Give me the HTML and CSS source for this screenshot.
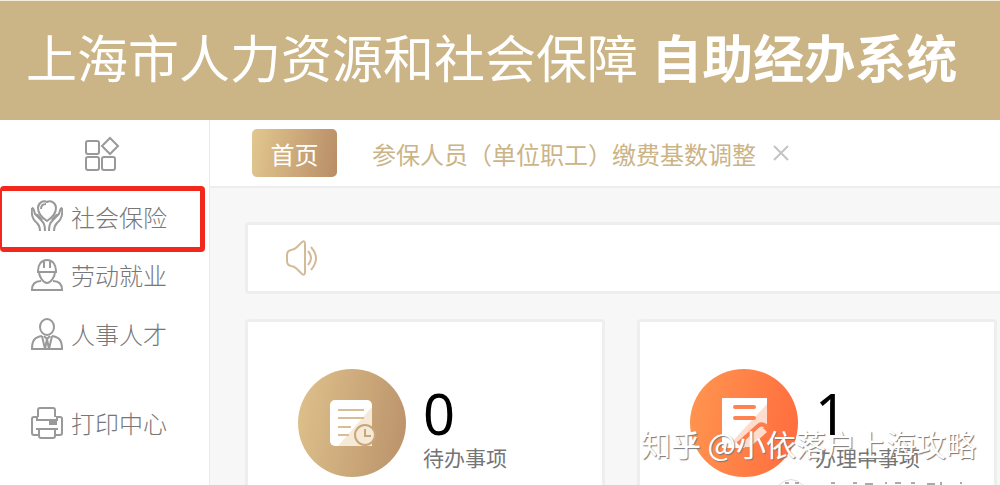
FILE: index.html
```html
<!DOCTYPE html>
<html lang="zh-CN">

<head>
    <meta charset="utf-8">
    <meta name="viewport" content="width=device-width, initial-scale=1.0">
    <title>上海市人力资源和社会保障 自助经办系统</title>

    <link rel="stylesheet" href="styles.css">
</head>

<body>

    <header>
        <h1>上海市人力资源和社会保障 <strong>自助经办系统</strong></h1>
    </header>

    <div class="layout">
        <nav class="sidebar">
            <button class="menu-toggle" aria-label="全部菜单">
                <svg width="36" height="36" viewBox="0 0 36 36">
                    <rect x="2" y="5" width="13" height="13" rx="2" />
                    <rect x="2" y="21" width="13" height="13" rx="2" />
                    <rect x="18" y="21" width="13" height="13" rx="2" />
                    <path d="M26 2L34 10L26 18L18 10Z" />
                </svg>
            </button>
            <a class="menu-item active" href="#">
                <svg width="32" height="32" viewBox="0 0 32 32">
                    <path d="M16 21C10 17 7 13 7 8C7 3 12 0 16 2C20 0 25 3 25 8C25 13 22 17 16 21Z" />
                    <path d="M10 9C10 6 12 4 15 4" />
                    <path d="M1 8C3 8 3 11 4 14L10 20C13 23 14 25 14 31M1 8C0 15 2 20 6 23C8 25 9 27 9 31M5 15C7 14 9 17 11 20" />
                    <path d="M31 8C29 8 29 11 28 14L22 20C19 23 18 25 18 31M31 8C32 15 30 20 26 23C24 25 23 27 23 31M27 15C25 14 23 17 21 20" />
                </svg>
                社会保险
            </a>
            <a class="menu-item" href="#">
                <svg width="32" height="32" viewBox="0 0 32 32">
                    <path d="M7 12C7 6 10 1 16 1C22 1 25 6 25 12M6 13H26M13 2V9M19 2V9" />
                    <path d="M8 13C8 17 12 24 16 24C20 24 24 17 24 13" />
                    <path d="M10 22C4 22 1 25 1 31H31C31 25 28 22 22 22" />
                </svg>
                劳动就业
            </a>
            <a class="menu-item" href="#">
                <svg width="32" height="32" viewBox="0 0 32 32">
                    <ellipse cx="16" cy="9" rx="7" ry="8" />
                    <path d="M11 18C4 19 1 22 1 31H31C31 22 28 19 21 18" />
                    <path d="M11 18L14 31L16 21L18 31L21 18M13 18L16 21L19 18" />
                </svg>
                人事人才
            </a>
            <a class="menu-item menu-print" href="#">
                <svg width="32" height="32" viewBox="0 0 32 32">
                    <path d="M7 10V3Q7 1 9 1H22Q24 1 24 3V10" />
                    <path d="M7 28H3Q1 28 1 26V12Q1 10 3 10H6V13H26V10H29Q31 10 31 12V26Q31 28 29 28H25" />
                    <path d="M5 22H27M8 22V29Q8 31 10 31H22Q24 31 24 29V22M19 15H25V17H19Z" />
                </svg>
                打印中心
            </a>
        </nav>

        <div class="content">
            <div class="tabs">
                <button class="tab-home">首页</button>
                <a class="tab" href="#">参保人员（单位职工）缴费基数调整</a>
                <button class="tab-close" aria-label="关闭">
                    <svg width="18" height="18" viewBox="0 0 18 18">
                        <path d="M2 2L16 16M16 2L2 16" />
                    </svg>
                </button>
            </div>

            <main>
                <section class="notice">
                    <svg width="36" height="36" viewBox="0 0 36 36">
                        <path d="M3 15Q3 11 7 10Q10 10 13 7L18 2Q21 0 21 4V32Q21 36 18 34L13 29Q10 26 7 26Q3 25 3 21Z" />
                        <path d="M24 11Q30 18 24 25M27 7Q37 18 27 30" />
                    </svg>
                </section>

                <section class="cards">
                    <article class="card">
                        <div class="circle gold">
                            <svg width="48" height="50" viewBox="0 0 48 50">
                                <rect x="2" y="2" width="42" height="46" rx="5" fill="#fff" />
                                <path d="M44 9V48H10Z" fill="#f5e9d8" />
                                <path d="M10 12H36M10 20H36M10 29H23M10 37H21" stroke="#d9bd94" stroke-width="2" />
                                <circle cx="37" cy="37" r="10" fill="#f5e9d8" stroke="#caa579" stroke-width="2" />
                                <path d="M37 31V38H43" fill="none" stroke="#caa579" stroke-width="2" />
                            </svg>
                        </div>
                        <div>
                            <div class="number">0</div>
                            <div class="label">待办事项</div>
                        </div>
                    </article>
                    <article class="card">
                        <div class="circle orange">
                            <svg width="48" height="50" viewBox="0 0 48 50">
                                <path d="M2 0H47V26L24 50H2Z" fill="#fff" />
                                <path d="M47 6V26L30 42L10 46Z" fill="#ffdccd" />
                                <path d="M15 9H34M15 20H34" stroke="#ff8250" stroke-width="4" stroke-linecap="round" />
                                <path d="M18 46L38 28Q42 24 48 30" fill="none" stroke="#ff7c49" stroke-width="4" />
                                <path d="M38 31Q42 27 47 34L30 49H20Z" fill="#ffdccd" />
                            </svg>
                        </div>
                        <div>
                            <div class="number">1</div>
                            <div class="label">办理中事项</div>
                        </div>
                    </article>
                </section>
            </main>
        </div>
    </div>

    <div class="watermark">知乎 @小依落户上海攻略</div>
    <svg class="footmark" width="190" height="6" viewBox="0 0 190 6">
        <path d="M2 6Q14 -5 26 6" stroke="#ddd" />
        <path d="M8 4H12M18 4H22M54 4H58M76 4H80M88 5H96M108 4H110M118 4H124M134 4H138M150 5H158M164 3V6M183 4H185" stroke="#aaa" stroke-width="2" />
    </svg>

</body>

</html>
```
FILE: styles.css
```css
* {
    box-sizing: border-box;
}

body {
    margin: 0;
    min-height: 100vh;
    display: flex;
    flex-direction: column;
    background: #f7f7f7;
    font-family: "Noto Sans", "Noto Sans CJK SC", sans-serif;
}

header {
    background: #cbb486;
    border-top: 1px solid #f3ecdd;
    color: #fff;
    padding: 19px 26px 24px;
}

h1 {
    margin: 0;
    font-size: 51px;
    font-weight: 400;
    line-height: 76px;
    white-space: nowrap;
}

button {
    border: 0;
    background: none;
    padding: 0;
    font-family: inherit;
}

a {
    text-decoration: none;
}

svg {
    display: block;
    flex: none;
}

.layout {
    flex: 1;
    display: flex;
}

.sidebar {
    width: 210px;
    flex: none;
    background: #fff;
    border-right: 1px solid #ebebeb;
}

.sidebar svg {
    fill: none;
    stroke: #999;
    stroke-width: 2;
}

.menu-toggle {
    display: block;
    padding: 16px 0 14px 84px;
}

.menu-item {
    display: flex;
    align-items: center;
    gap: 8px;
    height: 59px;
    padding-left: 31px;
    color: #777;
    font-size: 24px;
    font-weight: 300;
}

.menu-item.active {
    height: 66px;
    margin: 0 4px -7px 0;
    padding-left: 26px;
    padding-bottom: 6px;
    border: 5px solid #f3281c;
    border-left-width: 2px;
    padding-left: 29px;
    border-radius: 4px;
}

.menu-print {
    margin-top: 30px;
}

.content {
    flex: 1;
    min-width: 0;
    display: flex;
    flex-direction: column;
}

.tabs {
    height: 68px;
    background: #fff;
    border-bottom: 2px solid #ededed;
    display: flex;
    align-items: center;
    padding-left: 42px;
    font-size: 24px;
    white-space: nowrap;
}

.tab-home {
    width: 85px;
    height: 48px;
    border-radius: 5px;
    background: linear-gradient(100deg, #e2c78f, #b88d66);
    color: #fff;
    font-size: 24px;
}

.tab {
    margin-left: 35px;
    color: #cbb486;
}

.tab-close {
    margin-left: 16px;
}

.tab-close svg {
    stroke: #c4c4c4;
    stroke-width: 2;
}

main {
    flex: 1;
    display: flex;
    flex-direction: column;
    padding: 34px 0 0 35px;
}

.notice {
    height: 72px;
    background: #fff;
    border: 3px solid #eee;
    border-right: 0;
    border-radius: 4px 0 0 4px;
    display: flex;
    align-items: center;
    padding-left: 36px;
}

.notice svg {
    fill: none;
    stroke: #d3bb9a;
    stroke-width: 2;
}

.cards {
    flex: 1;
    margin-top: 25px;
    padding-right: 3px;
    display: grid;
    grid-template-columns: 1fr 1fr;
    gap: 32px;
}

.card {
    background: #fff;
    border: 3px solid #eee;
    border-bottom: 0;
    border-radius: 4px 4px 0 0;
    display: flex;
    align-items: flex-start;
    gap: 17px;
    padding: 47px 0 0 50px;
    white-space: nowrap;
}

.circle {
    width: 108px;
    height: 108px;
    flex: none;
    border-radius: 50%;
    display: flex;
    align-items: center;
    justify-content: center;
}

.gold {
    background: linear-gradient(100deg, #dfc28c, #ba916a);
}

.orange {
    background: linear-gradient(100deg, #ff9650, #ff6b3d);
}

.number {
    margin-top: 14px;
    font-size: 56px;
    line-height: 60px;
}

.label {
    color: #757575;
    font-size: 21px;
    line-height: 30px;
}

.watermark {
    position: absolute;
    right: 24px;
    bottom: 20px;
    color: #fff;
    font-family: "Noto Sans CJK SC", sans-serif;
    font-size: 30px;
    line-height: 44px;
    text-shadow: 1px 1px 1px #777;
    white-space: nowrap;
}

.footmark {
    position: absolute;
    right: 33px;
    bottom: 0;
    fill: none;
}
```
